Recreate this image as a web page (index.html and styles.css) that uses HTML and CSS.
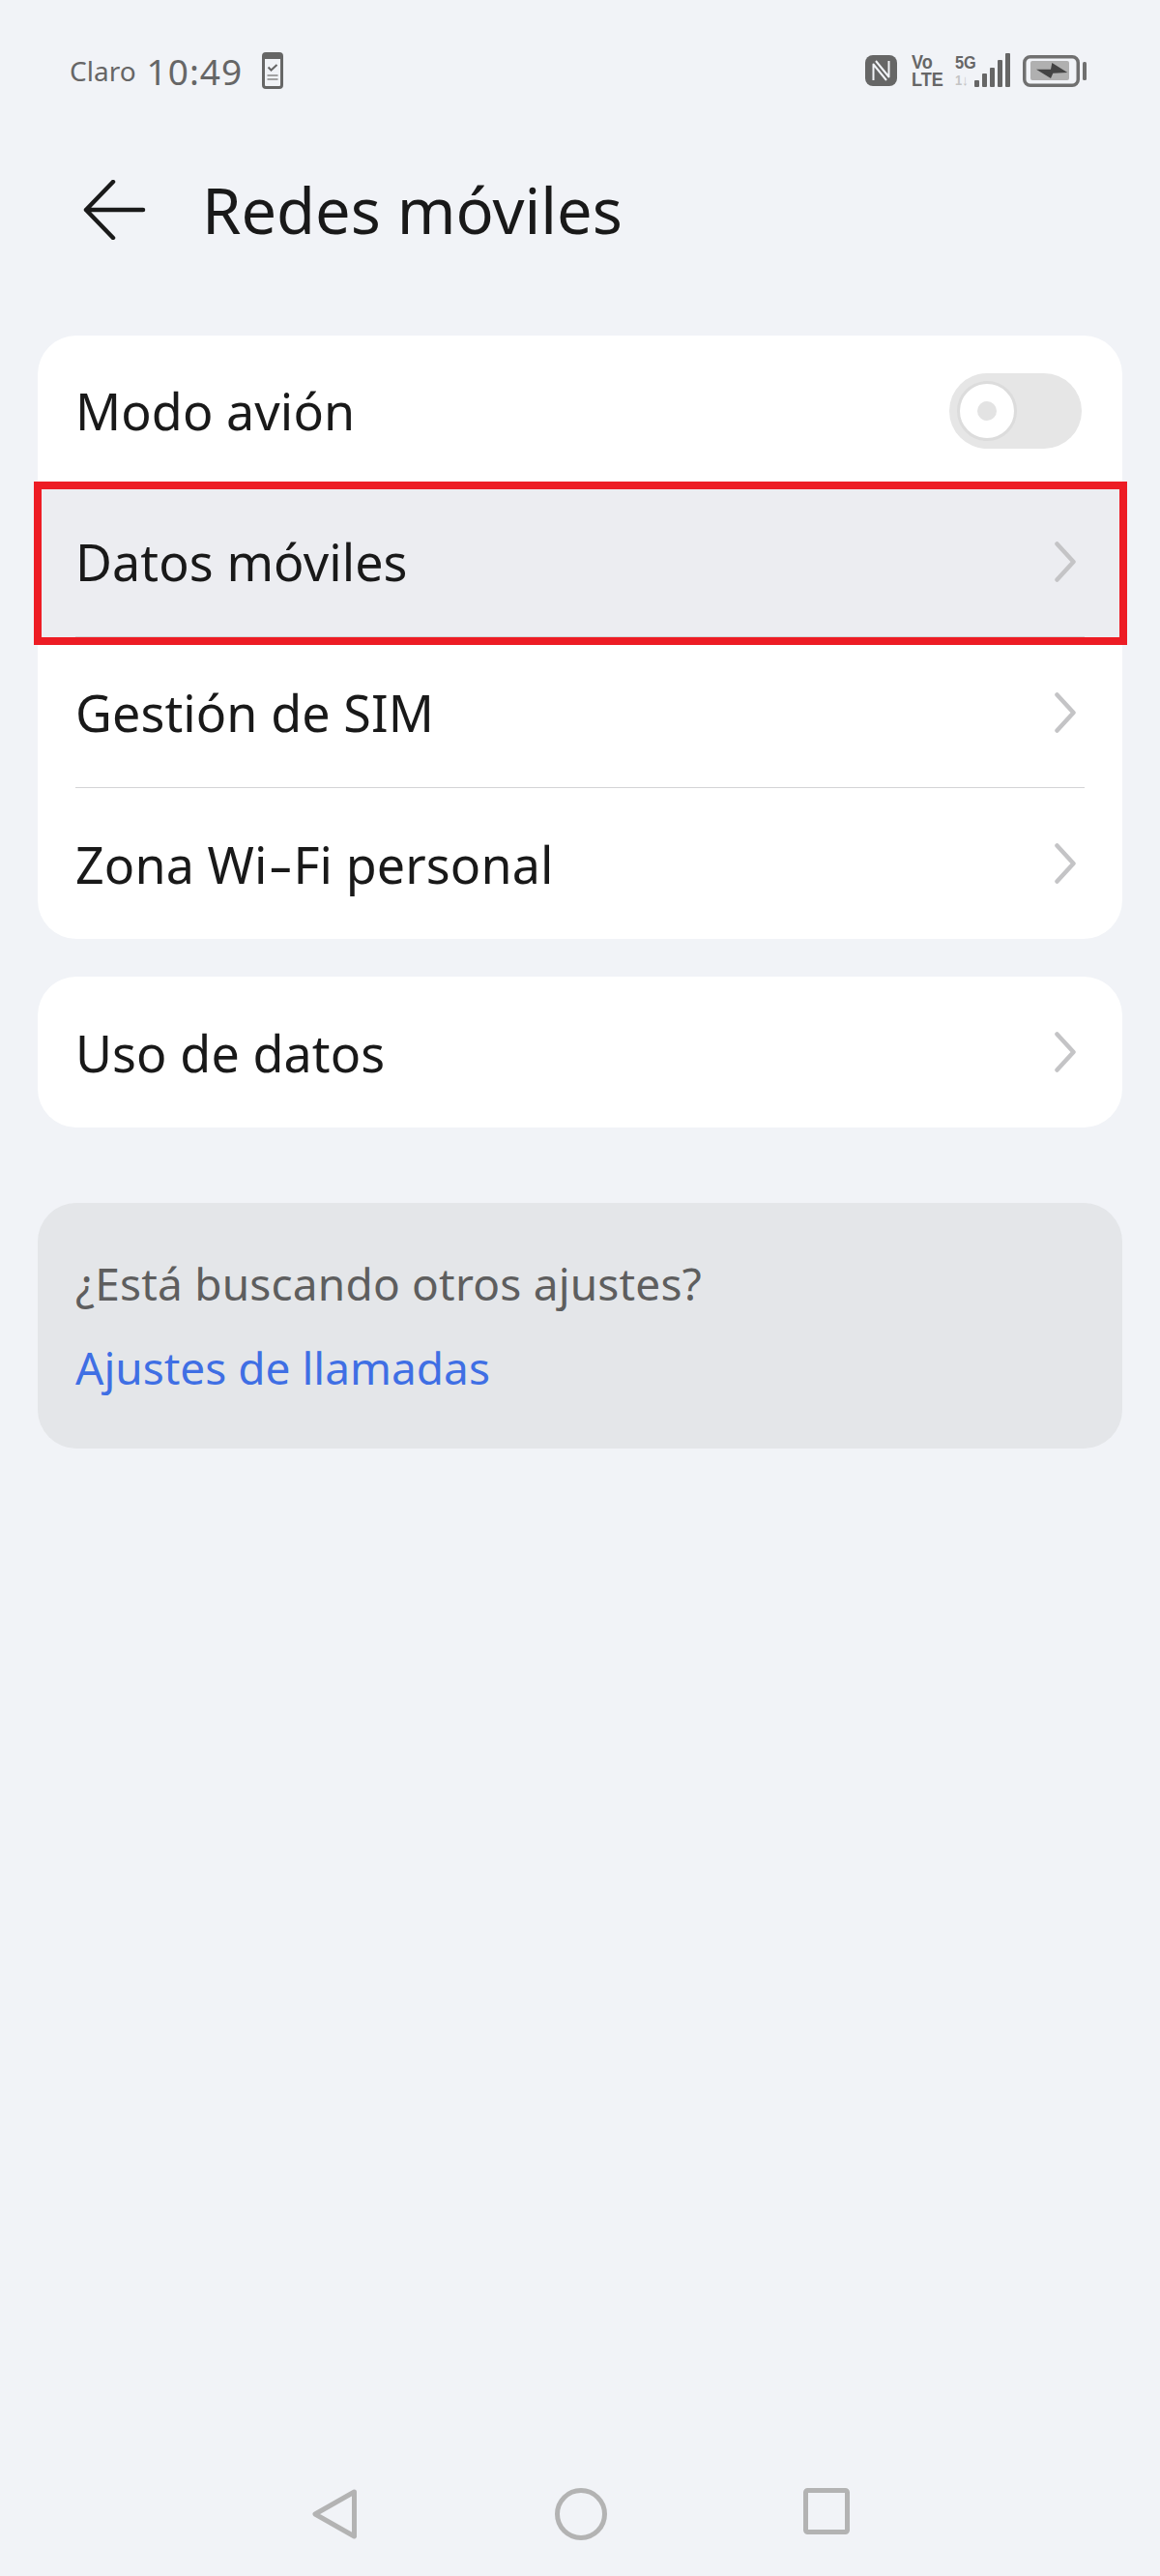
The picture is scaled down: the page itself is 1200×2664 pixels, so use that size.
FILE: index.html
```html
<!DOCTYPE html>
<html lang="es">
<head>
  <meta charset="UTF-8">
  <meta name="viewport" content="width=device-width, initial-scale=1.0">
  <title>Redes móviles</title>
  <link rel="stylesheet" href="styles.css">
</head>
<body>
  <div class="page">
    <div class="status-bar">
      <div class="status-left">
        <span class="carrier">Claro</span>
        <span class="clock">10:49</span>
        <svg class="phone-icon" width="22" height="38" viewBox="0 0 22 38">
          <rect x="1.5" y="1.5" width="19" height="35" rx="2.5" fill="none" stroke="#666" stroke-width="3"/>
          <rect x="1" y="1" width="20" height="6" fill="#666"/>
          <path d="M6.5 15.5l3 3 6-5.5" fill="none" stroke="#666" stroke-width="2"/>
          <path d="M5.5 24h11M5.5 28h11" stroke="#888" stroke-width="1.5"/>
        </svg>
      </div>
      <div class="status-right">
        <svg class="nfc-icon" width="33" height="32" viewBox="0 0 33 32">
          <rect width="33" height="32" rx="8" fill="#666"/>
          <path d="M8.500 26V9.500L22 26M24.500 6V22.500L11 6" fill="none" stroke="#f1f3f7" stroke-width="2" stroke-linejoin="round"/>
        </svg>
        <div class="volte"><span class="squeeze">Vo</span><span class="squeeze">LTE</span></div>
        <div class="net"><span class="net-5g squeeze">5G</span><span class="net-arrows squeeze">1↓</span></div>
        <div class="signal">
          <i class="bar bar-1"></i><i class="bar bar-2"></i><i class="bar bar-3"></i><i class="bar bar-4"></i><i class="bar bar-5"></i>
        </div>
        <svg class="battery-icon" width="66" height="33" viewBox="0 0 66 33">
          <rect x="1.750" y="1.750" width="55.500" height="29.500" rx="6" fill="none" stroke="#707070" stroke-width="3.500"/>
          <rect x="8" y="6" width="40" height="20" rx="2" fill="#b0b0b0"/>
          <path d="M14 14.700H29L30.300 8 46.300 18 31.300 18.700 29 24z" fill="#444"/>
          <rect x="62" y="7" width="4" height="19" rx="1.500" fill="#707070"/>
        </svg>
      </div>
    </div>

    <div class="title-bar">
      <svg class="back-icon" width="66" height="62" viewBox="0 0 66 62">
        <path d="M31 2L3 31l28 29M3 31h59" fill="none" stroke="#1a1a1a" stroke-width="4.500" stroke-linecap="round" stroke-linejoin="round"/>
      </svg>
      <h1>Redes móviles</h1>
    </div>

    <div class="card">
      <div class="row">
        <div class="row-body">
          <span>Modo avión</span>
          <div class="toggle"><div class="toggle-thumb"></div></div>
        </div>
      </div>
      <div class="row row-selected">
        <div class="row-body">
          <span>Datos móviles</span>
          <svg class="chevron" width="22" height="42" viewBox="0 0 22 42"><path d="M2.500 2.500L19.500 21 2.500 39.500" fill="none" stroke="#c4c4c6" stroke-width="4.500" stroke-linecap="round" stroke-linejoin="round"/></svg>
        </div>
      </div>
      <div class="row">
        <div class="row-body">
          <span>Gestión de SIM</span>
          <svg class="chevron" width="22" height="42" viewBox="0 0 22 42"><path d="M2.500 2.500L19.500 21 2.500 39.500" fill="none" stroke="#c4c4c6" stroke-width="4.500" stroke-linecap="round" stroke-linejoin="round"/></svg>
        </div>
      </div>
      <div class="row">
        <div class="row-body last">
          <span>Zona Wi<span class="wide-hyphen">-</span>Fi personal</span>
          <svg class="chevron" width="22" height="42" viewBox="0 0 22 42"><path d="M2.500 2.500L19.500 21 2.500 39.500" fill="none" stroke="#c4c4c6" stroke-width="4.500" stroke-linecap="round" stroke-linejoin="round"/></svg>
        </div>
      </div>
    </div>

    <div class="card card-single">
      <div class="row">
        <div class="row-body last">
          <span>Uso de datos</span>
          <svg class="chevron" width="22" height="42" viewBox="0 0 22 42"><path d="M2.500 2.500L19.500 21 2.500 39.500" fill="none" stroke="#c4c4c6" stroke-width="4.500" stroke-linecap="round" stroke-linejoin="round"/></svg>
        </div>
      </div>
    </div>

    <div class="hint">
      <p class="hint-text">¿Está buscando otros ajustes?</p>
      <a class="hint-link" href="#">Ajustes de llamadas</a>
    </div>

    <div class="nav-bar">
      <svg width="48" height="54" viewBox="0 0 48 54"><path d="M44.500 4L4 27l40.500 23z" fill="none" stroke="#b3b3b3" stroke-width="5" stroke-linejoin="round"/></svg>
      <svg width="54" height="54" viewBox="0 0 54 54"><circle cx="27" cy="27" r="24.500" fill="none" stroke="#b3b3b3" stroke-width="5"/></svg>
      <svg width="48" height="48" viewBox="0 0 48 48"><rect x="2.500" y="2.500" width="43" height="43" rx="2" fill="none" stroke="#b3b3b3" stroke-width="5"/></svg>
    </div>
  </div>
</body>
</html>
```

FILE: styles.css
```css
* { box-sizing: border-box; }
body { margin: 0; background: #f1f3f7; font-family: "Noto Sans", Roboto, sans-serif; color: #191919; }
.page { height: 2664px; display: flex; flex-direction: column; padding: 0 39px; overflow: hidden; }

/* status bar */
.status-bar { height: 150px; display: flex; justify-content: space-between; align-items: flex-start; padding: 54px 0 0 33px; color: #666; }
.status-left { display: flex; align-items: center; height: 38px; }
.carrier { font-size: 28px; margin-right: 11px; }
.clock { font-size: 37px; letter-spacing: 1px; margin-right: 20px; }
.status-right { display: flex; align-items: flex-start; margin-top: 1px; margin-right: 37px; height: 38px; }
.nfc-icon { margin-top: 2px; margin-right: 15px; }
.volte { width: 36px; display: flex; flex-direction: column; font-family: "Liberation Sans", sans-serif; font-weight: 700; font-size: 21px; line-height: 18px; margin-right: 9px; }
.net { width: 20px; display: flex; flex-direction: column; font-family: "Liberation Sans", sans-serif; font-weight: 700; line-height: 18px; margin-top: 1px; }
.squeeze { display: block; transform: scaleX(0.86); transform-origin: left center; white-space: nowrap; }
.net-5g { font-size: 19px; }
.net-arrows { font-size: 15px; color: #c4c4c4; }
.signal { display: flex; align-items: flex-end; gap: 3px; height: 36px; margin-top: -1px; margin-right: 13px; }
.bar { display: block; width: 5px; background: #666; border-radius: 1px; }
.bar-1 { height: 7px; }
.bar-2 { height: 14px; }
.bar-3 { height: 20px; }
.bar-4 { height: 28px; }
.bar-5 { height: 35px; }
.battery-icon { margin-top: 2px; }

/* title */
.title-bar { height: 197px; display: flex; align-items: flex-start; }
.back-icon { margin: 36px 0 0 47px; }
.title-bar h1 { margin: 21px 0 0 57px; font-size: 65px; line-height: 92px; font-weight: 450; }

/* cards */
.card { background: #fff; border-radius: 40px; }
.card-single { margin-top: 39px; }
.row { height: 156px; padding: 0 39px; position: relative; }
.row-body { height: 100%; display: flex; justify-content: space-between; align-items: center; font-size: 52px; font-weight: 450; letter-spacing: 0.1px; border-bottom: 1.5px solid #d4d4d6; }
.row-body.last { border-bottom: 0; }
.wide-hyphen { display: inline-block; width: 27px; text-align: center; transform: scaleX(1.5); }
.chevron { margin-right: 9px; }
.row-selected { background: #ecedf1; }
.row-selected::after { content: ""; position: absolute; left: -4px; right: -5px; top: -5px; bottom: -8px; border: 8px solid #ed1c24; }

.toggle { width: 137px; height: 78px; border-radius: 39px; background: #e6e6e6; margin-right: 3px; padding: 8px; }
.toggle-thumb { width: 62px; height: 62px; border-radius: 50%; background: #fff; border: 3px solid #dcdcdc; display: flex; align-items: center; justify-content: center; }
.toggle-thumb::after { content: ""; width: 20px; height: 20px; border-radius: 50%; background: #e3e3e3; }

/* hint */
.hint { height: 254px; margin-top: 78px; padding: 52px 39px 0; background: #e4e6e9; border-radius: 40px; }
.hint-text { margin: 0 0 25px; font-size: 46px; line-height: 62px; letter-spacing: 0.2px; color: #5e5e5e; }
.hint-link { display: block; font-size: 46px; line-height: 62px; color: #3f6fe4; text-decoration: none; }

/* nav */
.nav-bar { margin-top: auto; height: 91px; margin-left: 283px; margin-right: 282px; display: flex; justify-content: space-between; align-items: flex-start; }
```
